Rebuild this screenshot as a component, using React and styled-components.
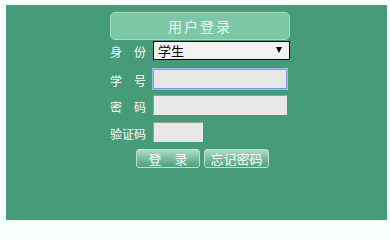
import React from "react";
import styled, { createGlobalStyle } from "styled-components";

const GlobalStyle = createGlobalStyle`
  body {
    margin: 0;
    background: #f8fffe;
    font-family: "Noto Sans CJK SC", "Liberation Sans", sans-serif;
  }
`;

const Panel = styled.div`
  margin: 5px 3px 0 6px;
  width: 381px;
  height: 215px;
  background: #469c79;
  padding: 7px 0 0 104px;
  box-sizing: border-box;
`;

const Title = styled.div`
  width: 180px;
  height: 28px;
  box-sizing: border-box;
  background: #7cc8a6;
  border: 1px solid #a6d9c2;
  border-radius: 5px;
  display: flex;
  align-items: center;
  justify-content: center;
  color: #eef8f3;
  font-size: 14px;
  letter-spacing: 2px;
`;

const Form = styled.div`
  display: flex;
  flex-direction: column;
`;

const Row = styled.div`
  display: flex;
  align-items: flex-end;
  margin-top: ${(p) => p.$mt}px;
`;

const Label = styled.span`
  width: 43px;
  flex: none;
  color: #fff;
  font-size: 12px;
  line-height: 14px;
  padding-bottom: 1px;
  white-space: pre;
`;

const SelectBox = styled.div`
  position: relative;
  width: 137px;
  height: 19px;
  box-sizing: border-box;
  border: 1px solid #000;
  background: #f2f2f2;
`;

const Select = styled.select`
  appearance: none;
  display: block;
  width: 100%;
  height: 17px;
  border: none;
  background: transparent;
  font-family: inherit;
  font-size: 13px;
  line-height: 17px;
  color: #000;
  padding: 0 0 0 4px;
  margin: 0;
  outline: none;
`;

const Arrow = styled.span`
  position: absolute;
  right: 7px;
  top: 5px;
  width: 0;
  height: 0;
  border-left: 3px solid transparent;
  border-right: 3px solid transparent;
  border-top: 6px solid #000;
  pointer-events: none;
`;

const Input = styled.input`
  width: ${(p) => p.$w}px;
  height: 20px;
  box-sizing: border-box;
  margin: 0;
  padding: 0 3px;
  background: #e8e8e8;
  border: 1px solid ${(p) => (p.$focus ? "#7a9ee0" : "#9a9a9a")};
  border-right-color: ${(p) => (p.$focus ? "#7a9ee0" : "#e8e8e8")};
  border-bottom-color: ${(p) => (p.$focus ? "#7a9ee0" : "#e8e8e8")};
  box-shadow: ${(p) => (p.$focus ? "0 0 0 1px #9dbcf0" : "none")};
  outline: none;
`;

const Buttons = styled.div`
  display: flex;
  gap: 4px;
  margin: 7px 0 0 26px;
`;

const Button = styled.button`
  width: ${(p) => p.$w}px;
  height: 19px;
  box-sizing: border-box;
  padding: 0;
  border: 1px solid #c2ddd0;
  border-radius: 3px;
  background: linear-gradient(#b2dcc8, #7cc1a2 45%, #4e9f7d);
  color: #fff;
  font-family: inherit;
  font-size: 13px;
  line-height: 17px;
  white-space: pre;
`;

export default function App() {
  return (
    <>
      <GlobalStyle />
      <Panel>
        <Title>用户登录</Title>
        <Form>
          <Row $mt={1}>
            <Label>{"身　份"}</Label>
            <SelectBox>
              <Select defaultValue="学生">
                <option>学生</option>
                <option>教师</option>
              </Select>
              <Arrow />
            </SelectBox>
          </Row>
          <Row $mt={9}>
            <Label>{"学　号"}</Label>
            <Input $w={134} $focus />
          </Row>
          <Row $mt={6}>
            <Label>{"密　码"}</Label>
            <Input $w={134} type="password" />
          </Row>
          <Row $mt={7}>
            <Label>验证码</Label>
            <Input $w={50} />
          </Row>
          <Buttons>
            <Button $w={64}>{"登　录"}</Button>
            <Button $w={65}>忘记密码</Button>
          </Buttons>
        </Form>
      </Panel>
    </>
  );
}
